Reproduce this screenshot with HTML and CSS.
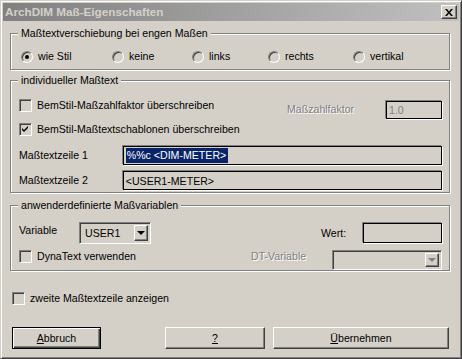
FILE: index.html
```html
<!DOCTYPE html>
<html lang="de">
<head>
  <meta charset="UTF-8" />
  <title>ArchDIM Maß-Eigenschaften</title>
  <link rel="stylesheet" href="styles.css">
</head>
<body>

  <div class="window">
    <div class="titlebar">
      <span class="title">ArchDIM Maß-Eigenschaften</span>
      <span class="close-btn">
        <svg width="8" height="7" viewBox="0 0 8 7"><path d="M0 0h2l2 2.4 2-2.4h2l-3 3.5 3 3.5h-2l-2-2.4-2 2.4h-2l3-3.5z" fill="#000"/></svg>
      </span>
    </div>

    <div class="content">

      <!-- Textverschiebung -->
      <div class="group g-shift">
        <span class="legend">Maßtextverschiebung bei engen Maßen</span>
        <div class="radio-row">
          <label class="radio"><span class="dot on"></span>wie Stil</label>
          <label class="radio"><span class="dot"></span>keine</label>
          <label class="radio"><span class="dot"></span>links</label>
          <label class="radio"><span class="dot"></span>rechts</label>
          <label class="radio"><span class="dot"></span>vertikal</label>
        </div>
      </div>

      <!-- individueller Text -->
      <div class="group g-text">
        <span class="legend">individueller Maßtext</span>
        <div class="row row-factor">
          <label class="check"><span class="box"></span>BemStil-Maßzahlfaktor überschreiben</label>
          <div class="pair">
            <span class="lbl disabled w-fak">Maßzahlfaktor</span>
            <span class="field f-factor grey">1.0</span>
          </div>
        </div>
        <div class="row row-tpl">
          <label class="check">
            <span class="box"><svg width="9" height="9" viewBox="0 0 9 9"><path d="M1 3l2 2 4-4v2l-4 4-2-2z" fill="#000"/></svg></span>
            BemStil-Maßtextschablonen überschreiben
          </label>
        </div>
        <div class="row row-line1">
          <span class="lbl w-line">Maßtextzeile 1</span>
          <span class="field f-line"><span class="sel">%%c &lt;DIM-METER&gt;</span></span>
        </div>
        <div class="row row-line2">
          <span class="lbl w-line">Maßtextzeile 2</span>
          <span class="field f-line">&lt;USER1-METER&gt;</span>
        </div>
      </div>

      <!-- Variablen -->
      <div class="group g-var">
        <span class="legend">anwenderdefinierte Maßvariablen</span>
        <div class="row row-var">
          <span class="lbl w-var">Variable</span>
          <span class="combo c-user">
            <span class="combo-text">USER1</span>
            <span class="drop"><span class="arrow"></span></span>
          </span>
          <div class="pair pair-wert">
            <span class="lbl w-wert">Wert:</span>
            <span class="field f-wert"></span>
          </div>
        </div>
        <div class="row row-dyna">
          <label class="check"><span class="box"></span>DynaText verwenden</label>
          <div class="pair">
            <span class="lbl disabled w-dt">DT-Variable</span>
            <span class="combo c-dt">
              <span class="combo-text"></span>
              <span class="drop"><span class="arrow grey-arrow"></span></span>
            </span>
          </div>
        </div>
      </div>

      <div class="row row-second">
        <label class="check"><span class="box"></span>zweite Maßtextzeile anzeigen</label>
      </div>

      <div class="buttons">
        <button class="btn btn-default b-cancel"><u>A</u>bbruch</button>
        <button class="btn b-help"><u>?</u></button>
        <button class="btn b-apply"><u>Ü</u>bernehmen</button>
      </div>

    </div>
  </div>

</body>
</html>
```

FILE: styles.css
```css
/* Basis */
* {
  margin: 0;
  padding: 0;
  box-sizing: border-box;
}

body {
  font-family: "Liberation Sans", Arial, sans-serif;
  font-size: 10.6px;
  color: #000;
  background: #d4d0c8;
}

/* Fenster */
.window {
  width: 462px;
  height: 359px;
  padding: 2px;
  background: #d4d0c8;
  border: 1px solid;
  border-color: #d4d0c8 #404040 #404040 #d4d0c8;
  box-shadow: inset 1px 1px 0 #fff, inset -1px -1px 0 #808080;
}

.titlebar {
  height: 18px;
  display: flex;
  align-items: center;
  justify-content: space-between;
  padding: 0 2px 0 2px;
  background: linear-gradient(to right, #808080, #c0c0c0);
}

.title {
  font-size: 11.7px;
  font-weight: bold;
  color: #d4d0c8;
  line-height: 18px;
}

.close-btn {
  width: 16px;
  height: 14px;
  display: flex;
  align-items: center;
  justify-content: center;
  background: #d4d0c8;
  border: 1px solid;
  border-color: #fff #404040 #404040 #fff;
  box-shadow: inset -1px -1px 0 #808080;
}

.content {
  padding: 12px 0 0 7px;
}

/* Gruppenrahmen */
.group {
  position: relative;
  width: 440px;
  border: 1px solid #808080;
  box-shadow: inset 1px 1px 0 #fff, 1px 1px 0 #fff;
}

.legend {
  position: absolute;
  top: -7px;
  left: 7px;
  padding: 0 3px;
  line-height: 13px;
  background: #d4d0c8;
}

.g-shift {
  height: 37px;
}

.g-text {
  height: 113px;
  margin-top: 10px;
  padding: 18px 7px 0 8px;
}

.g-var {
  height: 66px;
  margin-top: 12px;
  padding: 16px 7px 0 8px;
}

/* Optionsfelder */
.radio-row {
  display: grid;
  grid-template-columns: 91px 80px 76px 85px auto;
  padding: 16px 0 0 10px;
}

.radio {
  display: flex;
  align-items: center;
  gap: 5px;
  line-height: 13px;
}

.dot {
  width: 12px;
  height: 12px;
  border-radius: 50%;
  border: 1px solid;
  border-color: #808080 #fff #fff #808080;
  box-shadow: inset 1px 1px 0 #404040;
  display: flex;
  align-items: center;
  justify-content: center;
}

.dot.on::after {
  content: "";
  width: 4px;
  height: 4px;
  border-radius: 50%;
  background: #000;
}

/* Kontrollkästchen */
.check {
  display: flex;
  align-items: center;
  gap: 5px;
  line-height: 13px;
}

.box {
  width: 13px;
  height: 13px;
  flex: none;
  border: 1px solid;
  border-color: #808080 #fff #fff #808080;
  box-shadow: inset 1px 1px 0 #404040, inset -1px -1px 0 #d4d0c8;
  display: flex;
  align-items: center;
  justify-content: center;
}

/* Zeilen */
.row {
  display: flex;
  align-items: flex-start;
}

.pair {
  display: flex;
  align-items: flex-start;
  margin-left: auto;
}

.lbl {
  line-height: 13px;
}

.disabled {
  color: #808080;
  text-shadow: 1px 1px 0 #fff;
}

.row-factor {
  height: 20px;
}

.row-factor .pair {
  margin-top: 2px;
}

.w-fak {
  width: 99px;
  margin-top: 2px;
}

.row-tpl {
  margin-top: 4px;
}

.row-line1 {
  margin-top: 10px;
  align-items: center;
}

.row-line2 {
  margin-top: 6px;
  align-items: center;
}

.w-line {
  width: 104px;
}

/* Eingabefelder */
.field {
  display: flex;
  align-items: center;
  padding-left: 2px;
  border: 1px solid #000;
  box-shadow: -1px -1px 0 #808080, 1px 1px 0 #fff;
}

.f-factor {
  width: 56px;
  height: 18px;
}

.grey {
  color: #808080;
}

.f-line {
  width: 320px;
  height: 19px;
}

.sel {
  background: #0a246a;
  color: #fff;
  line-height: 15px;
  padding: 0 2px 0 1px;
}

.f-wert {
  width: 79px;
  height: 20px;
}

/* Kombinationsfelder */
.combo {
  display: flex;
  align-items: stretch;
  border: 1px solid;
  border-color: #808080 #fff #fff #808080;
  box-shadow: inset 1px 1px 0 #404040, inset -1px -1px 0 #d4d0c8;
  padding: 2px;
}

.combo-text {
  flex: 1;
  display: flex;
  align-items: center;
  padding-left: 3px;
}

.drop {
  width: 14px;
  display: flex;
  align-items: center;
  justify-content: center;
  border: 1px solid;
  border-color: #fff #404040 #404040 #fff;
  box-shadow: inset -1px -1px 0 #808080;
}

.arrow {
  width: 0;
  height: 0;
  border-left: 4px solid transparent;
  border-right: 4px solid transparent;
  border-top: 4px solid #000;
}

.grey-arrow {
  border-top-color: #808080;
}

.row-var {
  align-items: flex-start;
}

.w-var {
  width: 60px;
  margin-top: 2px;
}

.c-user {
  width: 72px;
  height: 22px;
}

.w-wert {
  width: 42px;
  margin-top: 4px;
}

.pair-wert {
  margin-top: 1px;
}

.row-dyna {
  margin-top: 6px;
}

.w-dt {
  width: 81px;
}

.c-dt {
  width: 110px;
  height: 20px;
}

/* unten */
.row-second {
  margin: 21px 0 0 2px;
}

.buttons {
  display: flex;
  margin: 22px 0 0 2px;
}

.btn {
  height: 22px;
  font-family: inherit;
  font-size: 10.6px;
  color: #000;
  background: #d4d0c8;
  border: 1px solid;
  border-color: #fff #404040 #404040 #fff;
  box-shadow: inset -1px -1px 0 #808080;
}

.btn-default {
  border: 1px solid #000;
  box-shadow: inset 1px 1px 0 #fff, inset -1px -1px 0 #404040, inset -2px -2px 0 #808080;
}

.b-cancel {
  width: 89px;
}

.b-help {
  width: 100px;
  margin-left: 64px;
}

.b-apply {
  width: 176px;
  margin-left: 8px;
}
```
